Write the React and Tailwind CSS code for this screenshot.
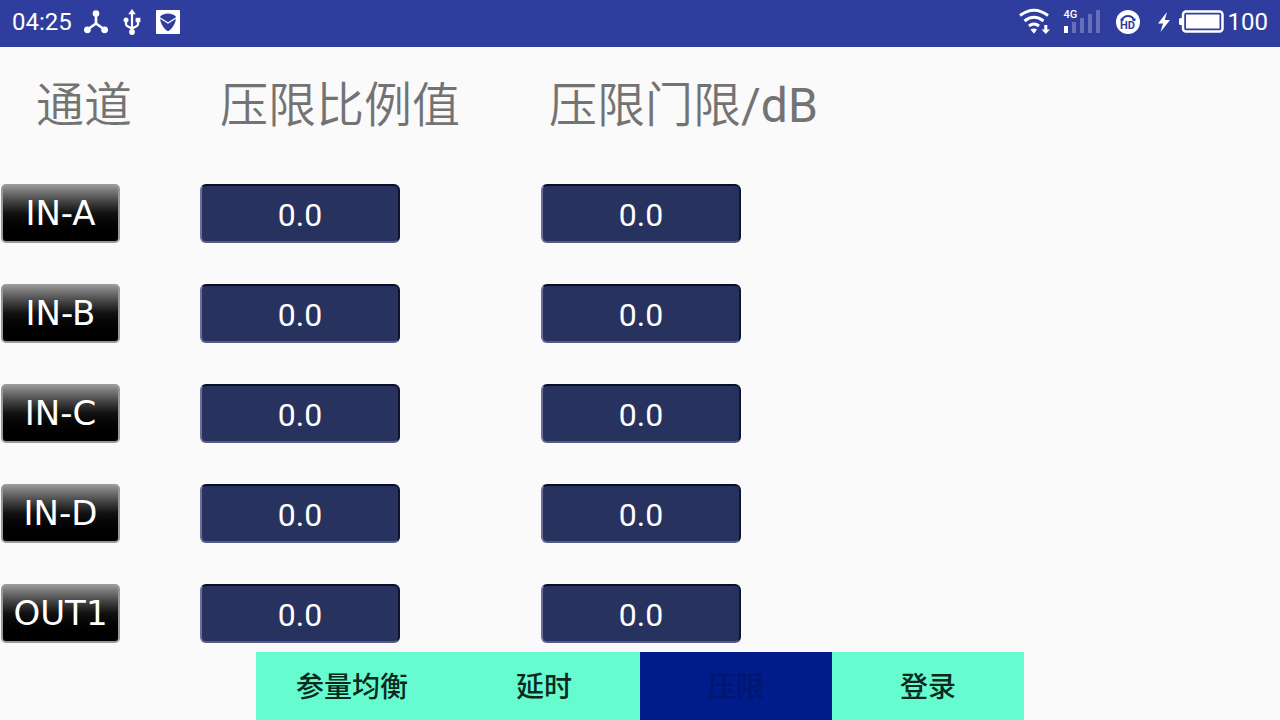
import React from "react";

const channels = ["IN-A", "IN-B", "IN-C", "IN-D", "OUT1"];
const tabs = ["参量均衡", "延时", "压限", "登录"];

function HubIcon() {
  return (
    <svg width="24" height="24" viewBox="0 0 24 24" fill="#fff" aria-hidden="true">
      <path d="M12 4v10M12 13.5L3.5 19.5M12 13.5l8.5 6" stroke="#fff" strokeWidth="2.6" fill="none" />
      <circle cx="12" cy="3.6" r="3.3" />
      <circle cx="3.4" cy="19.8" r="3.4" />
      <circle cx="20.6" cy="19.8" r="3.4" />
    </svg>
  );
}

function UsbIcon() {
  return (
    <svg width="18" height="26" viewBox="0 0 18 26" fill="#fff" aria-hidden="true">
      <path d="M9 3v19M3 10v5q0 1.500 1.500 2.200L9 19.500l4.500-2.300q1.500-.7 1.500-2.200V10" stroke="#fff" strokeWidth="2.200" fill="none" />
      <path d="M9 0l3.800 5.200H5.200z" />
      <circle cx="3" cy="11" r="2.500" />
      <path d="M12.600 8.800h4.800v4.400h-4.800z" />
      <circle cx="9" cy="23" r="2.900" />
    </svg>
  );
}

function ShieldIcon() {
  return (
    <svg width="24" height="24" viewBox="0 0 24 24" aria-hidden="true">
      <rect width="24" height="24" rx="1" fill="#fff" />
      <path d="M12 3.500C9 3.500 6.500 4.500 4.300 6.200 3.800 9 4.500 13 7 16.500c1.500 2.200 3 3.800 5 4.800 2-1 3.500-2.600 5-4.800 2.500-3.500 3.200-7.500 2.700-10.300C17.500 4.500 15 3.500 12 3.500z" fill="#2f3e9e" />
      <path d="M4 8l8 5 8-5" fill="none" stroke="#fff" strokeWidth="1.300" />
    </svg>
  );
}

function WifiIcon() {
  return (
    <svg width="31" height="27" viewBox="0 0 31 27" fill="none" stroke="#fff" strokeWidth="3" aria-hidden="true">
      <path d="M1 7.500Q15 -3 29 7.500" />
      <path d="M5.500 13Q15 5.500 24.500 13" />
      <path d="M10 18q5-4 10 0" />
      <path d="M11.500 21.500Q15 19.500 18 21.500L15 25.800z" fill="#fff" stroke="none" />
      <path d="M25.300 17h3v4.500h2.700l-4.200 4.500-4.200-4.500h2.700z" fill="#fff" stroke="none" />
    </svg>
  );
}

function SignalBars() {
  return (
    <svg width="37" height="23" viewBox="0 0 37 23" fill="#6670b8" aria-hidden="true">
      <rect y="16" width="4" height="7" fill="#fff" />
      <rect x="8" y="12" width="4" height="11" />
      <rect x="16" y="8" width="4" height="15" />
      <rect x="24" y="4" width="4" height="19" />
      <rect x="32" width="4" height="23" />
    </svg>
  );
}

function HdIcon() {
  return (
    <span className="relative flex size-6 items-center justify-center rounded-full bg-white">
      <svg className="absolute inset-0" width="24" height="24" viewBox="0 0 24 24" aria-hidden="true">
        <path d="M6 9.500Q8 6 12 6T18 9.500" fill="none" stroke="#2f3e9e" strokeWidth="1.800" />
        <path d="M4.500 8.500l3.500.5-.8 2H4.500zM19.500 8.500l-3.500.5.8 2h2.700z" fill="#2f3e9e" />
      </svg>
      <span className="relative pt-[7px] text-[11px] leading-none font-bold text-[#2f3e9e]">HD</span>
    </span>
  );
}

function ChargeIcon() {
  return (
    <svg width="14" height="20" viewBox="0 0 14 20" fill="#fff" aria-hidden="true">
      <path d="M10 0L1 11.500h5L3.500 20 13 8H7.800z" />
    </svg>
  );
}

function BatteryIcon() {
  return (
    <svg width="45" height="24" viewBox="0 0 45 24" aria-hidden="true">
      <rect x="4" y="1.500" width="39.500" height="20" rx="3" fill="none" stroke="#fff" strokeWidth="2.500" />
      <rect x="7" y="4.500" width="33.500" height="14" fill="#fff" />
      <path d="M3 8v7H1.500Q0 15 0 13.500v-4Q0 8 1.500 8z" fill="#fff" />
    </svg>
  );
}

function StatusBar() {
  return (
    <header className="flex h-[47px] shrink-0 items-center justify-between bg-[#2f3e9e] px-3 pb-1 text-2xl leading-none text-white">
      <div className="flex items-center">
        <span>04:25</span>
        <span className="ml-3 flex items-center gap-[15px]">
          <HubIcon />
          <UsbIcon />
          <ShieldIcon />
        </span>
      </div>
      <div className="flex items-center">
        <WifiIcon />
        <span className="relative ml-[14px] flex">
          <SignalBars />
          <span className="absolute -top-px left-0 text-[11px] leading-none font-medium">4G</span>
        </span>
        <span className="ml-[15px] flex items-center">
          <HdIcon />
        </span>
        <span className="ml-[17px] flex items-center gap-2">
          <ChargeIcon />
          <BatteryIcon />
        </span>
        <span className="ml-1">100</span>
      </div>
    </header>
  );
}

function ValueButton({ label, value }) {
  return (
    <button
      type="button"
      aria-label={`${label} ${value}`}
      className="flex h-[59px] w-[200px] items-center justify-center rounded-md border-2 border-t-[#0a0d26] border-r-[#10142f] border-b-[#555b86] border-l-[#6a7097] bg-[#28325e] pt-0.5 text-[32px] leading-none text-white"
    >
      {value}
    </button>
  );
}

export default function App() {
  return (
    <div className="flex min-h-screen flex-col bg-[#fafafa] font-[Roboto,'Noto_Sans_CJK_SC',sans-serif]">
      <StatusBar />
      <main className="flex-1">
        <table className="w-full table-fixed text-left">
          <colgroup>
            <col className="w-[200px]" />
            <col className="w-[341px]" />
            <col />
          </colgroup>
          <thead>
            <tr className="h-[137px] text-5xl whitespace-nowrap text-[#737373]">
              <th scope="col" className="pb-5 pl-9 font-[350]">通道</th>
              <th scope="col" className="pb-5 pl-5 font-[350]">压限比例值</th>
              <th scope="col" className="pb-5 pl-2 font-[350]">
                压限门限<span className="font-normal">/dB</span>
              </th>
            </tr>
          </thead>
          <tbody>
            {channels.map((name) => (
              <tr key={name} className="h-[100px] align-top last:h-[60px]">
                <th scope="row" className="p-0 font-normal">
                  <button
                    type="button"
                    className="ml-px flex h-[59px] w-[119px] items-center justify-center rounded-[5px] border-2 border-[#999999] bg-linear-to-b from-[#929292] via-[#111111] via-50% to-black pb-0.5 font-['DejaVu_Sans',sans-serif] text-[34px] leading-none whitespace-nowrap text-white"
                  >
                    {name}
                  </button>
                </th>
                <td className="p-0">
                  <ValueButton label={`${name} 压限比例值`} value="0.0" />
                </td>
                <td className="p-0">
                  <ValueButton label={`${name} 压限门限/dB`} value="0.0" />
                </td>
              </tr>
            ))}
          </tbody>
        </table>
      </main>
      <nav className="mx-auto grid h-[68px] w-3/5 shrink-0 grid-cols-4">
        {tabs.map((tab) => (
          <button
            key={tab}
            type="button"
            aria-current={tab === "压限" ? "page" : undefined}
            className={
              tab === "压限"
                ? "bg-[#001b8a] pt-1 text-[28px] leading-none font-medium text-[#001770]"
                : "bg-[#66fccf] pt-1 text-[28px] leading-none font-medium text-[#0a2a20]"
            }
          >
            {tab}
          </button>
        ))}
      </nav>
    </div>
  );
}
